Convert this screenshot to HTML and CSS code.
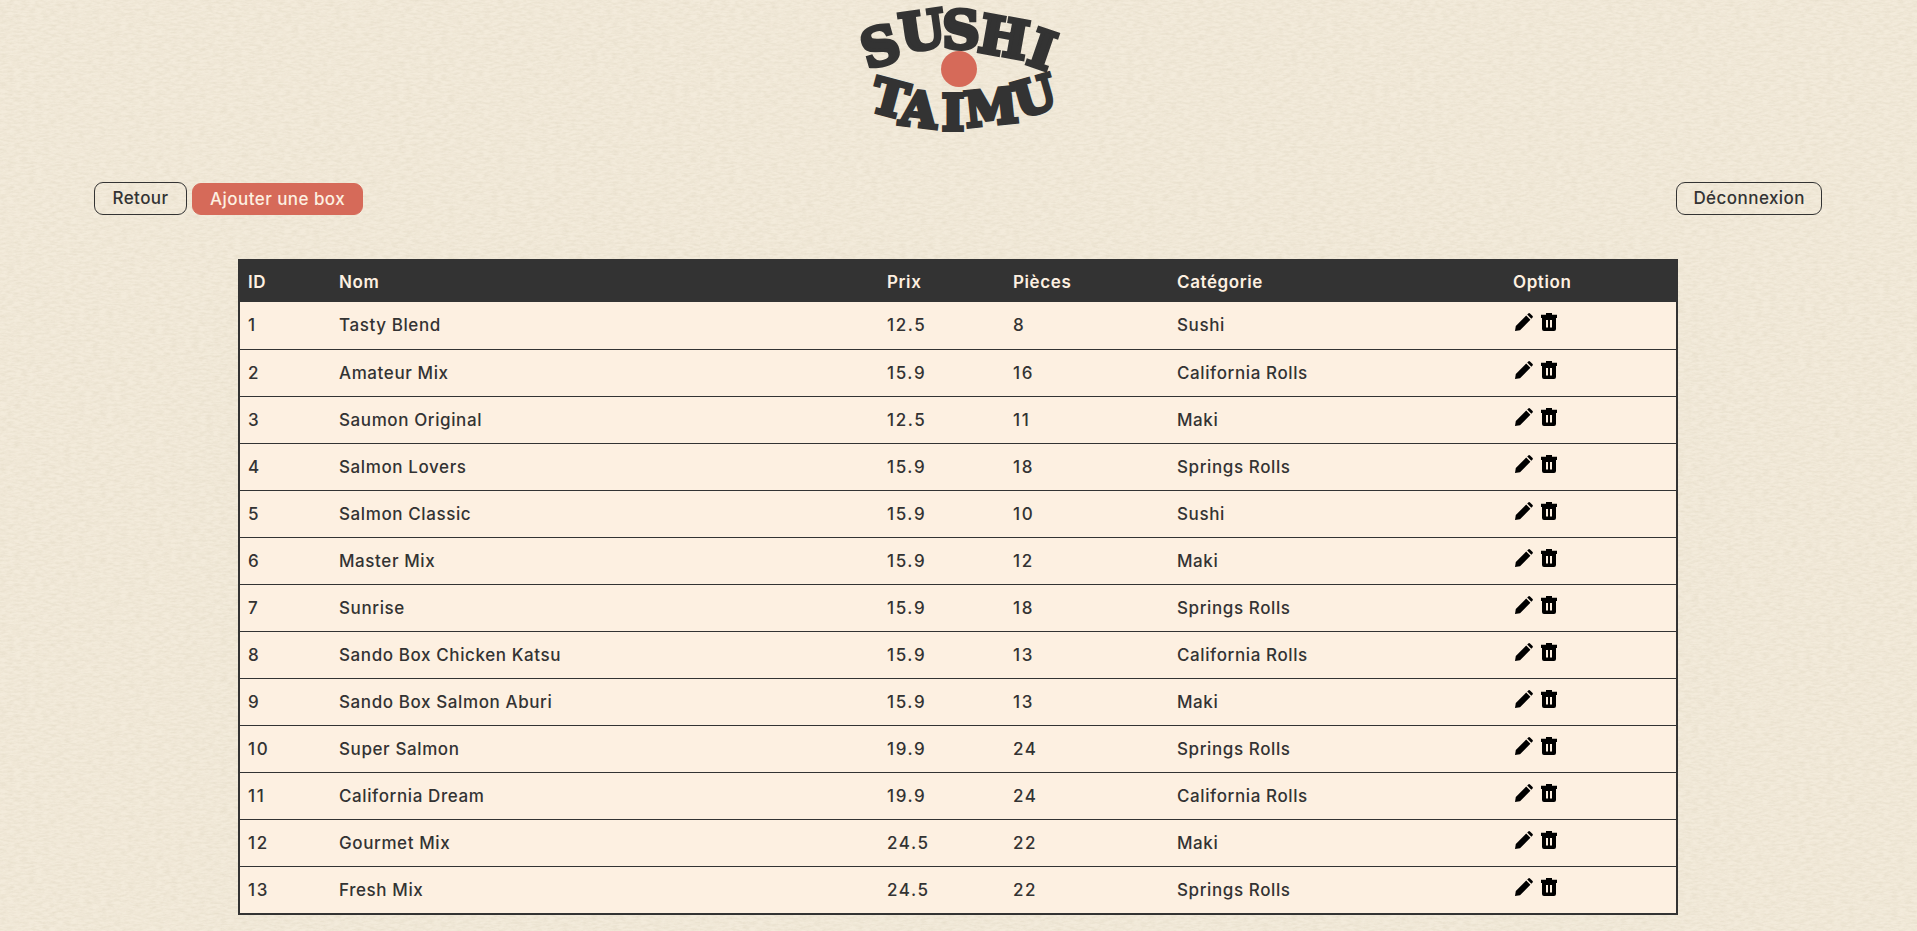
FILE: index.html
```html
<!DOCTYPE html>
<html lang="fr">

<head>
  <meta charset="UTF-8" />
  <title>Sushi Taimu - Administration</title>
  <link rel="stylesheet" href="styles.css">
</head>

<body>
  <header class="logo-wrap">
    <svg class="logo" viewBox="0 0 220 140" width="220" height="140" aria-label="Sushi Taimu">
      <text class="logo-text" x="37 76 112 152 188" y="69 52 48 51 63" rotate="-16 -8 0 10 19">SUSHI</text>
      <circle class="logo-dot" cx="110" cy="69" r="18" />
      <text class="logo-text small" x="37 68 104 144 191" y="110 124 130 127 118" rotate="15 7 0 -6 -16">TAIMU</text>
    </svg>
  </header>

  <nav class="toolbar">
    <div class="toolbar-left">
      <a class="btn btn-back" href="#">Retour</a>
      <a class="btn btn-red" href="#">Ajouter une box</a>
    </div>
    <a class="btn" href="#">Déconnexion</a>
  </nav>

  <table class="boxes">
    <colgroup>
      <col class="col-id">
      <col class="col-nom">
      <col class="col-prix">
      <col class="col-pieces">
      <col class="col-cat">
      <col>
    </colgroup>
    <thead>
      <tr>
        <th>ID</th>
        <th>Nom</th>
        <th>Prix</th>
        <th>Pièces</th>
        <th>Catégorie</th>
        <th>Option</th>
      </tr>
    </thead>
    <tbody id="rows"></tbody>
  </table>

  <script src="script.js"></script>
</body>

</html>
```

FILE: styles.css
```css
* {
  box-sizing: border-box;
}

body {
  margin: 0;
  min-height: 931px;
  font-family: Inter, 'Noto Sans', sans-serif;
  font-weight: 500;
  letter-spacing: .6px;
  color: #333;
  background-color: #f3ebdb;
  background-image: url("data:image/svg+xml,%3Csvg xmlns='http://www.w3.org/2000/svg' width='700' height='700'%3E%3Cfilter id='n'%3E%3CfeTurbulence type='fractalNoise' baseFrequency='.14 .45' numOctaves='4' stitchTiles='stitch'/%3E%3CfeColorMatrix values='0 0 0 0 .5 0 0 0 0 .43 0 0 0 0 .28 0 0 0 .32 -.1'/%3E%3C/filter%3E%3Crect width='700' height='700' filter='url(%23n)'/%3E%3C/svg%3E");
}

.logo-wrap {
  display: flex;
  justify-content: center;
  height: 140px;
}

.logo {
  display: block;
}

.logo-text {
  font-family: 'DejaVu Serif', serif;
  font-weight: 700;
  font-size: 52px;
  letter-spacing: 0;
  text-anchor: middle;
  fill: #333;
  stroke: #333;
  stroke-width: 4px;
}

.logo-text.small {
  font-size: 48px;
}

.logo-dot {
  fill: #d66a59;
}

.toolbar {
  display: flex;
  justify-content: space-between;
  align-items: center;
  margin-top: 42px;
  padding: 0 95px 0 94px;
}

.toolbar-left {
  display: flex;
  align-items: center;
  gap: 5px;
}

.btn {
  display: block;
  height: 33px;
  padding: 0 16px;
  border: 1px solid #333;
  border-radius: 9px;
  color: #333;
  font-size: 17px;
  letter-spacing: .45px;
  line-height: 31px;
  text-decoration: none;
}

.btn-back {
  min-width: 93px;
  text-align: center;
}

.btn-red {
  background: #d66a59;
  border-color: #d66a59;
  color: #fdf0e1;
  height: 32px;
  padding: 0 17px;
  line-height: 30px;
}

.boxes {
  width: 1440px;
  margin: 44px 0 0 238px;
  border-collapse: collapse;
  table-layout: fixed;
  background: #fdf0e1;
  border: 2px solid #333;
  font-size: 17px;
}

.col-id {
  width: 92px;
}

.col-nom {
  width: 548px;
}

.col-prix {
  width: 126px;
}

.col-pieces {
  width: 164px;
}

.col-cat {
  width: 336px;
}

th {
  height: 42px;
  padding: 0 8px;
  background: #333;
  color: #fdf0e1;
  font-weight: 600;
  text-align: left;
}

td {
  height: 47px;
  padding: 0 8px;
  border-bottom: 1px solid #333;
}

td.num {
  letter-spacing: 1.6px;
}

tr:last-child td {
  height: 48px;
  border-bottom: 0;
}

.options {
  display: flex;
  align-items: center;
  gap: 7px;
  margin: -6px 0 0 2px;
}

.options svg {
  display: block;
  width: 18px;
  height: 18px;
}
```

FILE: script.js
```js
const boxes = [
  [1, 'Tasty Blend', 12.5, 8, 'Sushi'],
  [2, 'Amateur Mix', 15.9, 16, 'California Rolls'],
  [3, 'Saumon Original', 12.5, 11, 'Maki'],
  [4, 'Salmon Lovers', 15.9, 18, 'Springs Rolls'],
  [5, 'Salmon Classic', 15.9, 10, 'Sushi'],
  [6, 'Master Mix', 15.9, 12, 'Maki'],
  [7, 'Sunrise', 15.9, 18, 'Springs Rolls'],
  [8, 'Sando Box Chicken Katsu', 15.9, 13, 'California Rolls'],
  [9, 'Sando Box Salmon Aburi', 15.9, 13, 'Maki'],
  [10, 'Super Salmon', 19.9, 24, 'Springs Rolls'],
  [11, 'California Dream', 19.9, 24, 'California Rolls'],
  [12, 'Gourmet Mix', 24.5, 22, 'Maki'],
  [13, 'Fresh Mix', 24.5, 22, 'Springs Rolls']
];

const pencil = '<svg viewBox="0 0 18 18"><path d="M0 18 L.8 13 L11.2 2.6 L15.4 6.8 L5 17.2 Z M12.2 1.6 L13.6 .3 Q14.3 -.1 15 .4 L17.6 3 Q18.1 3.7 17.6 4.4 L16.3 5.8 Z" fill="#000"/></svg>';
const trash = '<svg viewBox="0 0 18 18"><path fill-rule="evenodd" d="M6 0 H12 V1.8 H17 V5 H16 V16 Q16 18 14 18 H4 Q2 18 2 16 V5 H1 V1.8 H6 Z M6 7 V14.5 H8 V7 Z M10 7 V14.5 H12 V7 Z" fill="#000"/></svg>';

const rows = document.getElementById('rows');
boxes.forEach(b => {
  const tr = document.createElement('tr');
  tr.innerHTML = b.map(v => `<td${typeof v === 'number' ? ' class="num"' : ''}>${v}</td>`).join('') +
    `<td><div class="options">${pencil}${trash}</div></td>`;
  rows.appendChild(tr);
});
```
